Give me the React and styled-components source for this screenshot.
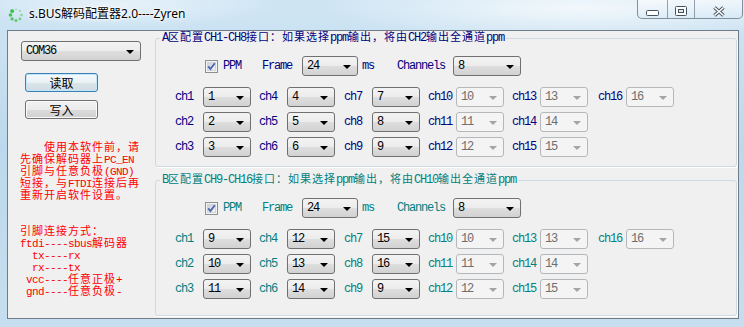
import React from "react";
import styled, { createGlobalStyle } from "styled-components";

const GlobalStyle = createGlobalStyle`
  html, body {
    margin: 0;
    padding: 0;
  }
  body {
    width: 744px;
    height: 327px;
    overflow: hidden;
    font-family: "Liberation Mono", "Noto Sans CJK SC", monospace;
    font-size: 12px;
  }
`;

const Frame = styled.div`
  width: 744px;
  height: 327px;
  display: flex;
  flex-direction: column;
  background:
    radial-gradient(ellipse 260px 34px at 580px 8px, rgba(255, 255, 255, 0.75), rgba(255, 255, 255, 0)),
    radial-gradient(ellipse 160px 24px at 120px 4px, rgba(255, 255, 255, 0.5), rgba(255, 255, 255, 0)),
    linear-gradient(180deg, #cfe5f4 0%, #bdd8ec 45%, #c6deef 100%);
`;

const TitleBar = styled.div`
  height: 30px;
  flex-shrink: 0;
  display: flex;
  align-items: flex-start;
`;

const AppIcon = styled.svg`
  width: 16px;
  height: 16px;
  margin: 7px 0 0 8px;
  flex-shrink: 0;
`;

const Caption = styled.div`
  margin: 6px 0 0 5px;
  font-family: "Noto Sans", "Noto Sans CJK SC", sans-serif;
  font-size: 12px;
  line-height: 16px;
  color: #000;
  text-shadow: 0 0 6px #fff, 0 0 3px #fff, 0 0 2px #fff;
`;

const Controls = styled.div`
  margin: 0 1px 0 auto;
  height: 19px;
  display: flex;
  box-sizing: border-box;
  border: 1px solid rgba(58, 76, 96, 0.6);
  border-top: none;
  border-radius: 0 0 5px 5px;
  background: linear-gradient(180deg, rgba(255, 255, 255, 0.55), rgba(214, 232, 244, 0.5));
  overflow: hidden;
`;

const CtlButton = styled.div`
  width: ${(p) => p.$w}px;
  display: flex;
  justify-content: center;
  align-items: flex-start;
  padding-top: ${(p) => p.$top}px;
  box-sizing: border-box;
  & + & {
    border-left: 1px solid rgba(58, 76, 96, 0.5);
  }
`;

const Client = styled.div`
  margin: 0 5px 0 7px;
  height: 289px;
  box-sizing: border-box;
  border: 1px solid #6f7d8a;
  background: #f0f0f0;
  display: flex;
`;

const Side = styled.div`
  width: 147px;
  flex-shrink: 0;
  display: flex;
  flex-direction: column;
  align-items: flex-start;
  padding-top: 10px;
`;

const Combo = styled.div`
  width: ${(p) => p.$w}px;
  height: 20px;
  flex-shrink: 0;
  box-sizing: border-box;
  margin-left: ${(p) => p.$ml || 0}px;
  display: flex;
  align-items: center;
  padding-left: 4px;
  border: 1px solid ${(p) => (p.$off ? "#b4b8bb" : "#707070")};
  border-radius: 3px;
  background: ${(p) =>
    p.$off
      ? "#f4f4f4"
      : "linear-gradient(180deg, #f3f3f3 0%, #ececec 50%, #dedede 51%, #d2d2d2 100%)"};
  color: ${(p) => (p.$off ? "#6d6d6d" : "#000")};
  letter-spacing: -1.2px;
  line-height: 12px;
`;

const Arrow = styled.span`
  margin: 1px 6px 0 auto;
  width: 0;
  height: 0;
  border-left: 4px solid transparent;
  border-right: 4px solid transparent;
  border-top: 4px solid ${(p) => (p.$off ? "#a4a4a4" : "#000")};
`;

const PushButton = styled.div`
  width: 73px;
  height: 19px;
  box-sizing: border-box;
  margin: ${(p) => p.$mt}px 0 0 17px;
  display: flex;
  align-items: center;
  justify-content: center;
  border: 1px solid ${(p) => (p.$primary ? "#3c7fb1" : "#707070")};
  border-radius: 3px;
  background: ${(p) =>
    p.$primary
      ? "linear-gradient(180deg, #f4f9fc 0%, #eaf1f5 50%, #dbe5ea 51%, #d0dce2 100%)"
      : "linear-gradient(180deg, #f2f2f2 0%, #ebebeb 50%, #dddddd 51%, #cfcfcf 100%)"};
  box-shadow: inset 0 0 0 1px ${(p) => (p.$primary ? "#bfe6fb" : "#fbfbfb")};
  font-family: "Noto Sans CJK SC", sans-serif;
  font-size: 12px;
  line-height: 12px;
  color: #000;
`;

const Lat = styled.span`
  letter-spacing: -1.2px;
`;

const Han = styled.span`
  font-size: 11px;
  letter-spacing: 1px;
`;

const Notes = styled.div`
  margin: 23px 0 0 12px;
  color: #f00;
  line-height: 12px;
  white-space: pre;
  ${Lat} {
    font-size: 11px;
    letter-spacing: -0.6px;
  }
`;

const NoteLine = styled.div`
  height: 12px;
`;

const Main = styled.div`
  flex: 1;
  display: flex;
  flex-direction: column;
`;

const Group = styled.fieldset`
  margin: ${(p) => p.$mt}px 1px 0 0;
  padding: 11px 0 0 0;
  height: ${(p) => p.$h}px;
  box-sizing: border-box;
  min-width: 0;
  border: 1px solid #d0d9df;
  border-radius: 3px;
  box-shadow: 1px 1px 0 #fff;
  color: ${(p) => p.$color};
`;

const Legend = styled.legend`
  margin-left: 4px;
  padding: 0 2px;
  height: 14px;
  line-height: 14px;
`;

const TopRow = styled.div`
  height: 20px;
  display: flex;
  align-items: center;
  padding-left: 49px;
`;

const Check = styled.svg`
  width: 13px;
  height: 13px;
  flex-shrink: 0;
`;

const Label = styled.span`
  margin-left: ${(p) => p.$ml}px;
  letter-spacing: -1.2px;
  line-height: 12px;
  white-space: pre;
`;

const ChGrid = styled.div`
  margin: 11px 0 0 19px;
  display: grid;
  grid-template-columns: 84px 85px 84px 84px 86px auto;
  grid-template-rows: repeat(3, 20px);
  grid-auto-flow: column;
  row-gap: 5px;
`;

const Cell = styled.div`
  display: flex;
  align-items: center;
`;

const ChName = styled.span`
  width: 28px;
  flex-shrink: 0;
  letter-spacing: -1.2px;
  line-height: 12px;
`;

function mix(text) {
  return text
    .split(/([\x20-\x7e]+)/)
    .filter(Boolean)
    .map((part, i) =>
      /^[\x20-\x7e]+$/.test(part) ? <Lat key={i}>{part}</Lat> : <Han key={i}>{part}</Han>
    );
}

const notes = [
  "    使用本软件前，请",
  "先确保解码器上PC_EN",
  "引脚与任意负极(GND)",
  "短接，与FTDI连接后再",
  "重新开启软件设置。",
  "",
  "",
  "引脚连接方式：",
  "ftdi----sbus解码器",
  "  tx----rx",
  "  rx----tx",
  " vcc----任意正极+",
  " gnd----任意负极-",
];

const groups = [
  {
    title: "A区配置CH1-CH8接口：如果选择ppm输出，将由CH2输出全通道ppm",
    color: "#000080",
    mt: 0,
    h: 136,
    values: [1, 2, 3, 4, 5, 6, 7, 8, 9],
  },
  {
    title: "B区配置CH9-CH16接口：如果选择ppm输出，将由CH10输出全通道ppm",
    color: "#008080",
    mt: 6,
    h: 143,
    values: [9, 10, 11, 12, 13, 14, 15, 16, 9],
  },
];

function Spinner() {
  const dots = [0, 1, 2, 3, 4, 5, 6, 7];
  return (
    <AppIcon viewBox="0 0 16 16">
      {dots.map((i) => {
        const a = (i / 8) * Math.PI * 2 - Math.PI / 2;
        return (
          <circle
            key={i}
            cx={8 + Math.cos(a) * 5.5}
            cy={8 + Math.sin(a) * 5.5}
            r={0.9 + i * 0.15}
            fill="#2fbf3a"
            opacity={0.35 + i * 0.09}
          />
        );
      })}
    </AppIcon>
  );
}

function CheckBox() {
  return (
    <Check viewBox="0 0 13 13">
      <defs>
        <linearGradient id="cb" x1="0" y1="0" x2="1" y2="1">
          <stop offset="0" stopColor="#cbcfd5" />
          <stop offset="1" stopColor="#f6f6f6" />
        </linearGradient>
      </defs>
      <rect x="0.5" y="0.5" width="12" height="12" fill="#f4f4f4" stroke="#8e8f8f" />
      <rect x="2.5" y="2.5" width="8" height="8" fill="url(#cb)" stroke="#d0d3d7" />
      <path d="M3.2 6.4 L5.4 9 L9.8 3.2" fill="none" stroke="#4a67b0" strokeWidth="1.9" />
    </Check>
  );
}

function ChannelGroup({ g }) {
  const cells = [];
  for (let n = 1; n <= 16; n++) {
    const off = n > 9;
    const v = off ? n : g.values[n - 1];
    cells.push(
      <Cell key={n}>
        <ChName>ch{n}</ChName>
        <Combo $w={48} $off={off}>
          {v}
          <Arrow $off={off} />
        </Combo>
      </Cell>
    );
  }
  return (
    <Group $mt={g.mt} $h={g.h} $color={g.color}>
      <Legend>{mix(g.title)}</Legend>
      <TopRow>
        <CheckBox />
        <Label $ml={5}>PPM</Label>
        <Label $ml={21}>Frame</Label>
        <Combo $w={56} $ml={10}>
          24
          <Arrow />
        </Combo>
        <Label $ml={4}>ms</Label>
        <Label $ml={23}>Channels</Label>
        <Combo $w={68} $ml={8}>
          8
          <Arrow />
        </Combo>
      </TopRow>
      <ChGrid>{cells}</ChGrid>
    </Group>
  );
}

export default function App() {
  return (
    <Frame>
      <GlobalStyle />
      <TitleBar>
        <Spinner />
        <Caption>s.BUS解码配置器2.0----Zyren</Caption>
        <Controls>
          <CtlButton $w={29} $top={10}>
            <svg width="13" height="6" viewBox="0 0 13 6">
              <rect x="0.5" y="0.5" width="12" height="5" rx="1" fill="#fff" stroke="#44525f" />
            </svg>
          </CtlButton>
          <CtlButton $w={27} $top={6}>
            <svg width="12" height="10" viewBox="0 0 12 10">
              <rect x="0.5" y="0.5" width="11" height="9" rx="1" fill="#fff" stroke="#44525f" />
              <rect x="3.5" y="3.5" width="5" height="3" fill="#dfe8ef" stroke="#44525f" />
            </svg>
          </CtlButton>
          <CtlButton $w={48} $top={6}>
            <svg width="14" height="11" viewBox="0 0 14 11">
              <path d="M2.5 1.5 L11.5 9.5 M11.5 1.5 L2.5 9.5" stroke="#44525f" strokeWidth="3.6" />
              <path d="M2.5 1.5 L11.5 9.5 M11.5 1.5 L2.5 9.5" stroke="#fff" strokeWidth="1.6" />
            </svg>
          </CtlButton>
        </Controls>
      </TitleBar>
      <Client>
        <Side>
          <Combo $w={120} $ml={13}>
            COM36
            <Arrow />
          </Combo>
          <PushButton $mt={12} $primary>
            读取
          </PushButton>
          <PushButton $mt={8}>写入</PushButton>
          <Notes>
            {notes.map((line, i) => (
              <NoteLine key={i}>{mix(line)}</NoteLine>
            ))}
          </Notes>
        </Side>
        <Main>
          {groups.map((g) => (
            <ChannelGroup key={g.color} g={g} />
          ))}
        </Main>
      </Client>
    </Frame>
  );
}
